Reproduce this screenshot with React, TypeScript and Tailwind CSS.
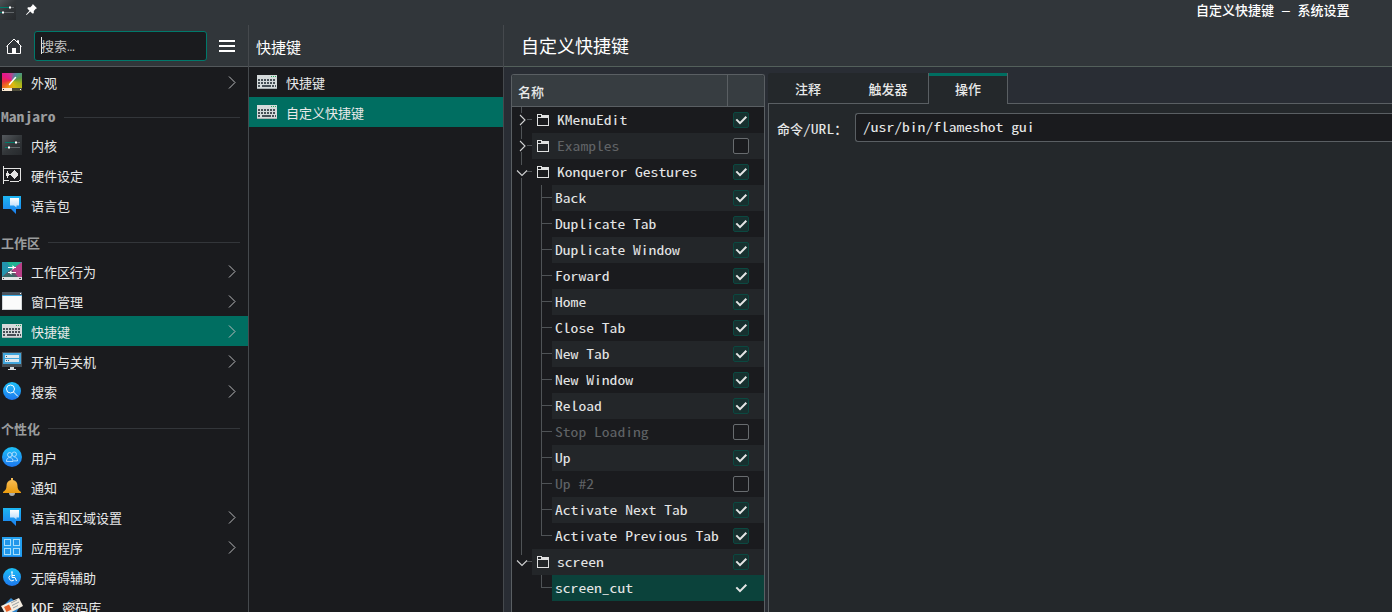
import React from "react";

type NavItem = { label: React.ReactNode; icon: React.ReactNode; more?: boolean; active?: boolean };

function Mono({ children, className = "" }: { children: React.ReactNode; className?: string }) {
  return (
    <span className={`inline-block origin-left scale-x-[1.2] font-['Noto_Sans_Mono_CJK_SC','Liberation_Mono',monospace] text-[13px] leading-none whitespace-pre ${className}`}>
      {children}
    </span>
  );
}

function KeyboardIcon() {
  return (
    <svg width="20" height="14" viewBox="0 0 20 14" shapeRendering="crispEdges">
      <rect width="20" height="14" fill="#d5dadb" />
      <rect y="13" width="20" height="1" fill="#a9afb1" />
      <path d="M14 1h1v1h-1zM16 1h1v1h-1zM18 1h1v1h-1z" fill="#27ae60" />
      <path d="M1 5h18M1 8h18M1 11h3M15 11h4" stroke="#475057" strokeWidth="2" strokeDasharray="2 1" fill="none" />
      <path d="M5 11h9" stroke="#475057" strokeWidth="2" />
    </svg>
  );
}

function SlidersIcon() {
  return (
    <svg width="20" height="20" viewBox="0 0 20 20">
      <defs>
        <linearGradient id="sl" x1="0" y1="0" x2="1" y2="1">
          <stop offset="0" stopColor="#555a5e" />
          <stop offset="0.5" stopColor="#33373a" />
          <stop offset="1" stopColor="#26292c" />
        </linearGradient>
      </defs>
      <rect width="20" height="20" fill="url(#sl)" />
      <path d="M3 7.500h11" stroke="#007a69" />
      <path d="M14 7.500h4M7 12.500h11" stroke="#62676a" />
      <path d="M3 12.500h4" stroke="#007a69" />
      <rect x="13" y="6.500" width="2" height="2" fill="#fff" />
      <rect x="6" y="11.500" width="2" height="2" fill="#fff" />
    </svg>
  );
}

function PaletteIcon() {
  return (
    <div className="flex h-[18px] w-5 flex-col">
      <div className="h-[15px] bg-[conic-gradient(#a9508f_0deg,#6a6fa0_20deg,#48948e_45deg,#5d9a4a_75deg,#a9b51b_110deg,#d8bd10_160deg,#f19b15_205deg,#ed6a1f_235deg,#e82d42_265deg,#e6168c_305deg,#d0308c_335deg,#a9508f_360deg)]">
        <svg width="20" height="15" viewBox="0 0 20 15">
          <path d="M7.500 11.500l2-2.500M9.500 9l4-4.500" stroke="#fff" strokeWidth="1.500" strokeLinecap="round" />
        </svg>
      </div>
      <svg width="20" height="3" viewBox="0 0 20 3" shapeRendering="crispEdges">
        <rect width="10" height="3" fill="#fbe9d2" />
        <rect x="10" width="10" height="3" fill="#4b4a38" />
        <path d="M1 1h1v1H1z" fill="#222" />
        <path d="M18 1h1v1h-1z" fill="#fff" />
      </svg>
    </div>
  );
}

function HardwareIcon() {
  return (
    <svg width="20" height="20" viewBox="0 0 20 20" shapeRendering="crispEdges">
      <path d="M1.500 1v18M1 3.500h17.500v12h-2M2 15.500h5M8 16.500h9" stroke="#e3e3e3" fill="none" />
      <path d="M12 5h1v1h1v1h1v1h1v3h-1v1h-1v1h-1v1h-1v-1h-1v-1h-1v-1H9v-1H7v1H6v2H5v-2H4V8h1V6h1v2h1v1h2V8h1V7h1V6h1z" fill="#e3e3e3" />
    </svg>
  );
}

function SpeechIcon() {
  return (
    <svg width="18" height="18" viewBox="0 0 18 18">
      <defs>
        <linearGradient id="sp" x1="0" y1="0" x2="0" y2="1">
          <stop offset="0" stopColor="#1db7f4" />
          <stop offset="1" stopColor="#1c7ff0" />
        </linearGradient>
        <linearGradient id="sq" x1="0" y1="0" x2="0" y2="1">
          <stop offset="0" stopColor="#fff" />
          <stop offset="1" stopColor="#b6dafa" />
        </linearGradient>
      </defs>
      <path d="M0 0h18v13h-5v5l-5-5H0z" fill="url(#sp)" />
      <path d="M7 2h9v7.500h-2.500v2L11 9.500H7z" fill="url(#sq)" />
    </svg>
  );
}

function BehaviorIcon() {
  return (
    <svg width="20" height="18" viewBox="0 0 20 18">
      <rect width="20" height="15" fill="#2394ad" />
      <path d="M5 0h15L10 8z" fill="#20b393" />
      <path d="M20 0v15h-6L9 8z" fill="#b83f87" />
      <path d="M9 7l7 8H0z" fill="#565a66" />
      <path d="M0 15l9-4 4 4z" fill="#356b68" />
      <rect y="15" width="20" height="3" fill="#dfe3e4" />
      <path d="M1 16h1v1H1zM17 16h2v1h-2z" fill="#444" />
      <path d="M6 5.500h8M6 10.500h8" stroke="#fff" />
      <path d="M10.500 3l2.500 2.500L10.500 8zM9.500 8L7 10.500 9.500 13z" fill="#fff" />
    </svg>
  );
}

function WindowIcon() {
  return (
    <svg width="20" height="18" viewBox="0 0 20 18" shapeRendering="crispEdges">
      <rect width="20" height="18" fill="#fbfbfb" />
      <rect width="20" height="3" fill="#4b545e" />
      <rect y="3" width="20" height="1" fill="#3daee9" />
      <rect x="18" y="1" width="1" height="1" fill="#fff" />
      <path d="M0 4h1v13h18V4h1v14H0z" fill="#d3d6d8" />
    </svg>
  );
}

function PowerIcon() {
  return (
    <svg width="20" height="18" viewBox="0 0 20 18" shapeRendering="crispEdges">
      <rect width="20" height="15" fill="#454d53" />
      <rect x="1" y="1" width="18" height="11" fill="#43a6dc" />
      <rect x="3" y="3" width="14" height="3" fill="#dde8ee" />
      <rect x="3" y="7" width="14" height="3" fill="#dde8ee" />
      <path d="M4 4h1v1H4zM4 8h1v1H4zM6 8h1v1H6z" fill="#45525b" />
      <path d="M8 15h4v2h2v1H6v-1h2z" fill="#d4d8da" />
    </svg>
  );
}

function Disc({ children, size = 18 }: { children: React.ReactNode; size?: number }) {
  return (
    <svg width={size} height={size} viewBox="0 0 18 18">
      <defs>
        <linearGradient id="disc" x1="0" y1="0" x2="0" y2="1">
          <stop offset="0" stopColor="#1dc0f7" />
          <stop offset="1" stopColor="#1d77ee" />
        </linearGradient>
      </defs>
      <circle cx="9" cy="9" r="9" fill="url(#disc)" />
      <g fill="none" stroke="#fff">{children}</g>
    </svg>
  );
}

function BellIcon() {
  return (
    <svg width="18" height="18" viewBox="0 0 18 18">
      <defs>
        <linearGradient id="bell" x1="0" y1="0" x2="0" y2="1">
          <stop offset="0" stopColor="#fbc15c" />
          <stop offset="1" stopColor="#e99a0d" />
        </linearGradient>
      </defs>
      <path d="M6 15h6c0 2-1 3-3 3s-3-1-3-3z" fill="#a8adb0" />
      <path d="M8 0h2v2c3 .5 4.500 3 4.500 6 0 3 1 4.500 3.500 6v1H0v-1c2.500-1.500 3.500-3 3.500-6 0-3 1.500-5.500 4.500-6z" fill="url(#bell)" />
    </svg>
  );
}

function AppsIcon() {
  return (
    <svg width="20" height="20" viewBox="0 0 20 20">
      <rect width="20" height="20" fill="#1c82df" />
      <rect width="20" height="19" fill="#239ff0" />
      <g fill="#2196ea" stroke="#a6ddfb">
        <rect x="2.500" y="2.500" width="6" height="6" />
        <rect x="11.500" y="2.500" width="6" height="6" />
        <rect x="2.500" y="11.500" width="6" height="6" />
        <rect x="11.500" y="11.500" width="6" height="6" />
      </g>
    </svg>
  );
}

function WalletIcon() {
  return (
    <svg className="shrink-0" width="22" height="20" viewBox="0 0 22 20">
      <path d="M2 9l8-8 9 8-5 9H4z" fill="#3186cd" />
      <path d="M0 9L18 1l4 8L5 18z" fill="#f3ece0" />
      <path d="M3 10l5-2.500 2.500 5-5 2.500z" fill="#e9632a" />
      <path d="M10 6l6-3M11 8.500l7-3.500M12 11l5-2.500" stroke="#98a0a4" />
    </svg>
  );
}

const groups: { title?: React.ReactNode; latin?: boolean; items: NavItem[] }[] = [
  { items: [{ label: "外观", icon: <PaletteIcon />, more: true }] },
  {
    title: <Mono className="mr-[9px]">Manjaro</Mono>,
    latin: true,
    items: [
      { label: "内核", icon: <SlidersIcon /> },
      { label: "硬件设定", icon: <HardwareIcon /> },
      { label: "语言包", icon: <SpeechIcon /> },
    ],
  },
  {
    title: "工作区",
    items: [
      { label: "工作区行为", icon: <BehaviorIcon />, more: true },
      { label: "窗口管理", icon: <WindowIcon />, more: true },
      { label: "快捷键", icon: <KeyboardIcon />, more: true, active: true },
      { label: "开机与关机", icon: <PowerIcon />, more: true },
      {
        label: "搜索",
        icon: <Disc><circle cx="7.500" cy="7" r="4" /><path d="M10.500 10l4.500 4.500" /></Disc>,
        more: true,
      },
    ],
  },
  {
    title: "个性化",
    items: [
      {
        label: "用户",
        icon: (
          <Disc size={20}>
            <g strokeWidth="0.8" stroke="#bfe4ff">
              <circle cx="7" cy="7" r="2" /><circle cx="11" cy="6.500" r="2" />
              <path d="M4 13c0-2 1-3.500 3-3.500s3 1.500 3 3.500zM10.500 12.500H14c0-2-1-3.500-3-3.500" />
            </g>
          </Disc>
        ),
      },
      { label: "通知", icon: <BellIcon /> },
      { label: "语言和区域设置", icon: <SpeechIcon />, more: true },
      { label: "应用程序", icon: <AppsIcon />, more: true },
      {
        label: "无障碍辅助",
        icon: (
          <Disc>
            <path d="M9 5v4.500h3l1.500 3.500M9 7.500h3M7 7.500a3 3 0 1 0 4 4.500" />
            <circle cx="9" cy="4.200" r="0.600" />
          </Disc>
        ),
      },
      { label: <><Mono className="mr-[5.200px]">KDE </Mono>密码库</>, icon: <WalletIcon /> },
    ],
  },
];

function NavRow({ item }: { item: NavItem }) {
  return (
    <div className={`flex h-[30px] shrink-0 items-center ${item.active ? "bg-[#006e61]" : ""}`}>
      <div className="flex w-6 shrink-0 items-center justify-center">{item.icon}</div>
      <div className="ml-[7px] flex-1 pt-px leading-[20px] whitespace-nowrap">{item.label}</div>
      {item.more && (
        <svg className="mr-3" width="8" height="13" viewBox="0 0 8 13">
          <path d="M1 .5l6 6-6 6" fill="none" stroke="#b9bbbc" />
        </svg>
      )}
    </div>
  );
}

type Row = { name: string; level: 1 | 2; on: boolean; open?: boolean; last?: boolean; selected?: boolean; tail?: boolean };

const rows: Row[] = [
  { name: "KMenuEdit", level: 1, on: true, open: false },
  { name: "Examples", level: 1, on: false, open: false },
  { name: "Konqueror Gestures", level: 1, on: true, open: true },
  { name: "Back", level: 2, on: true },
  { name: "Duplicate Tab", level: 2, on: true },
  { name: "Duplicate Window", level: 2, on: true },
  { name: "Forward", level: 2, on: true },
  { name: "Home", level: 2, on: true },
  { name: "Close Tab", level: 2, on: true },
  { name: "New Tab", level: 2, on: true },
  { name: "New Window", level: 2, on: true },
  { name: "Reload", level: 2, on: true },
  { name: "Stop Loading", level: 2, on: false },
  { name: "Up", level: 2, on: true },
  { name: "Up #2", level: 2, on: false },
  { name: "Activate Next Tab", level: 2, on: true },
  { name: "Activate Previous Tab", level: 2, on: true, last: true },
  { name: "screen", level: 1, on: true, open: true, tail: true },
  { name: "screen_cut", level: 2, on: true, last: true, selected: true, tail: true },
];

function Branch({ row }: { row: Row }) {
  if (row.level === 1) {
    return (
      <svg className="shrink-0" width="20" height="26" viewBox="0 0 20 26" fill="none">
        <path d={row.tail ? "M9.500 0v6M15 12.500h5" : "M9.500 0v6M9.500 19v7M15 12.500h5"} stroke="#4f5356" shapeRendering="crispEdges" />
        <path d={row.open ? "M5 11.500l5 5 5-5" : "M8 8l5 5-5 5"} stroke="#d0d1d2" strokeWidth="1.100" />
      </svg>
    );
  }
  return (
    <svg className="shrink-0" width="40" height="26" viewBox="0 0 40 26" fill="none" stroke="#4f5356" shapeRendering="crispEdges">
      {!row.tail && <path d="M9.500 0v26" />}
      <path d={row.last ? "M29.500 0v13" : "M29.500 0v26"} />
      <path d="M29 12.500h11" />
    </svg>
  );
}

function Check({ row }: { row: Row }) {
  const box = row.selected ? "border-transparent" : row.on ? "border-[#0b4840] bg-[#17302f]" : "border-[#686c6f] bg-[#1a1b1e]";
  return (
    <div className={`mr-[15px] flex h-4 w-4 shrink-0 items-center justify-center rounded-[2px] border ${box}`}>
      {row.on && (
        <svg width="14" height="14" viewBox="0 0 14 14">
          <path d="M2.300 6.400l3.700 3.700L12.300 3.700" fill="none" stroke="#e4e5e5" strokeWidth="2" />
        </svg>
      )}
    </div>
  );
}

function TreeRow({ row, alt }: { row: Row; alt: boolean }) {
  const bg = row.selected ? "bg-[#0b423b]" : alt ? "bg-[#232629]" : "";
  return (
    <div className="flex h-[26px] shrink-0">
      <Branch row={row} />
      <div className={`flex min-w-0 flex-1 items-center ${bg}`}>
        {row.level === 1 && (
          <svg className="ml-[5px]" width="12" height="12" viewBox="0 0 12 12" shapeRendering="crispEdges">
            <path d="M.5.500h4v3h-4zM.5 3.500h11v8H.5z" fill="none" stroke="#e0e1e1" />
            <path d="M5 1h7v3H4V3h1z" fill="#e0e1e1" />
          </svg>
        )}
        <div className={`flex flex-1 pb-[2px] font-medium ${row.level === 1 ? "pl-2" : "pl-[3px]"} ${row.on ? "text-[#e4e5e5]" : "text-[#606366]"}`}>
          <Mono>{row.name}</Mono>
        </div>
        <Check row={row} />
      </div>
    </div>
  );
}

function Tab({ children, active }: { children: React.ReactNode; active?: boolean }) {
  return (
    <div
      className={`flex h-[31px] w-20 shrink-0 items-center justify-center pt-px font-medium ${
        active ? "border-x border-[#5a5f63] shadow-[inset_0_3px_0_#006e61]" : "border-b border-[#5a5f63]"
      }`}
    >
      {children}
    </div>
  );
}

export default function App() {
  return (
    <div className="flex h-[612px] w-[1392px] flex-col overflow-hidden bg-[#31363a] font-['Noto_Sans_CJK_SC',sans-serif] text-[13px] text-[#e8e9e9]">
      <header className="flex h-[25px] shrink-0 items-center">
        <div className="-mt-[5px] -ml-1"><SlidersIcon /></div>
        <svg className="-mt-[6px] ml-[10px]" width="11" height="11" viewBox="0 0 11 11">
          <path d="M6.800 0L11 4.200 9.800 4.700 7.800 7v2.200L6.300 9.500 4.300 7.500.6 11 0 10.400 3.500 6.700 1.500 4.700 1.800 3.300h2.500L6.300 1.200z" fill="#fff" />
        </svg>
        <div className="mt-[-3px] mr-[42.500px] ml-auto font-medium whitespace-pre text-white">
          自定义快捷键<span className="font-['Liberation_Mono',monospace]"> — </span>系统设置
        </div>
      </header>

      <div className="flex h-[587px] min-h-0">
        <aside className="flex w-[249px] shrink-0 flex-col border-r border-[#45494d] bg-[#1a1b1e]">
          <div className="flex h-[42px] shrink-0 items-center border-b border-[#53585b] bg-[#31363a]">
            <svg className="ml-[6px]" width="16" height="16" viewBox="0 0 16 16" fill="none" stroke="#fff">
              <path d="M.5 8.500L8 1l7.500 7.500M1.500 8v7.500h13V8M11.500 4V2.500h1V5" />
              <path d="M6 16v-6h4v6z" fill="#fff" stroke="none" />
            </svg>
            <div className="ml-3 flex h-[30px] w-[173px] items-center rounded-[3px] border border-[#00796b] bg-[#1a1b1e] pl-[6px] text-[#c2c3c3]">
              <span className="h-[17px] w-px bg-[#e8e9e9]" />
              <span className="-ml-px pt-[2px]">搜索<span className="font-['Liberation_Mono',monospace]">…</span></span>
            </div>
            <svg className="ml-3" width="16" height="12" viewBox="0 0 16 12" shapeRendering="crispEdges">
              <path d="M0 0h16v2H0zM0 5h16v2H0zM0 10h16v2H0z" fill="#fff" />
            </svg>
          </div>
          <nav className="flex flex-col">
            {groups.map((g, i) => (
              <React.Fragment key={i}>
                {g.title && (
                  <div className={`flex shrink-0 items-center pr-2 pl-px font-bold text-[#9b9d9e] ${g.latin ? "h-[33px] pt-2" : "h-9 pt-[9px]"}`}>
                    <span className={g.latin ? "pb-px" : ""}>{g.title}</span>
                    <span className="ml-2 h-px flex-1 bg-[#33363a]" />
                  </div>
                )}
                {g.items.map((item, j) => <NavRow key={j} item={item} />)}
              </React.Fragment>
            ))}
          </nav>
        </aside>

        <section className="flex w-[255px] shrink-0 flex-col border-r border-[#45494d] bg-[#1a1b1e]">
          <h2 className="flex h-[42px] shrink-0 items-center border-b border-[#53585b] bg-[#31363a] pt-[3px] pl-[7px] text-[15px] text-white">快捷键</h2>
          {["快捷键", "自定义快捷键"].map((t, i) => (
            <div key={t} className={`flex h-[30px] items-center pl-2 ${i === 1 ? "bg-[#006e61]" : ""}`}>
              <KeyboardIcon />
              <span className="pt-px pl-[9px]">{t}</span>
            </div>
          ))}
        </section>

        <main className="flex min-w-0 flex-1 flex-col bg-[#292d34]">
          <h1 className="flex h-[42px] shrink-0 items-center border-b border-[#53605b] bg-[#31363a] pl-[17px] text-[18px] text-white">自定义快捷键</h1>
          <div className="flex min-h-0 flex-1">
            <div className="mt-[7px] ml-[7px] flex w-[254px] shrink-0 flex-col overflow-hidden rounded-t-[3px] border border-b-0 border-[#5a5f63] bg-[#1a1b1e]">
              <div className="flex h-8 shrink-0 border-b border-[#5a5f63] bg-[#373d41]">
                <div className="flex w-[216px] items-center border-r border-[#5a5f63] pt-[2px] pl-[6px] font-medium">名称</div>
              </div>
              {rows.map((row, i) => <TreeRow key={row.name} row={row} alt={i % 2 === 1} />)}
            </div>

            <div className="mt-[6px] ml-[3px] flex min-w-0 flex-1 flex-col">
              <div className="flex shrink-0">
                <div className="flex rounded-tl-[3px] bg-[#24282b]">
                  <Tab>注释</Tab>
                  <Tab>触发器</Tab>
                  <Tab active>操作</Tab>
                </div>
                <div className="flex-1 border-b border-[#5a5f63]" />
              </div>
              <div className="flex flex-1 items-start border-l border-[#5a5f63] bg-[#24282b] pt-[9px] pl-2">
                <div className="flex h-[29px] w-[78px] shrink-0 items-center pt-[2px] font-medium whitespace-nowrap">
                  命令<Mono className="mr-[5.200px]">/URL</Mono>：
                </div>
                <div className="flex h-[29px] flex-1 items-center rounded-l-[3px] border border-r-0 border-[#5a5f63] bg-[#1a1b1e] pb-[2px] pl-[6.500px] font-medium">
                  <Mono>/usr/bin/flameshot gui</Mono>
                </div>
              </div>
            </div>
          </div>
        </main>
      </div>
    </div>
  );
}
